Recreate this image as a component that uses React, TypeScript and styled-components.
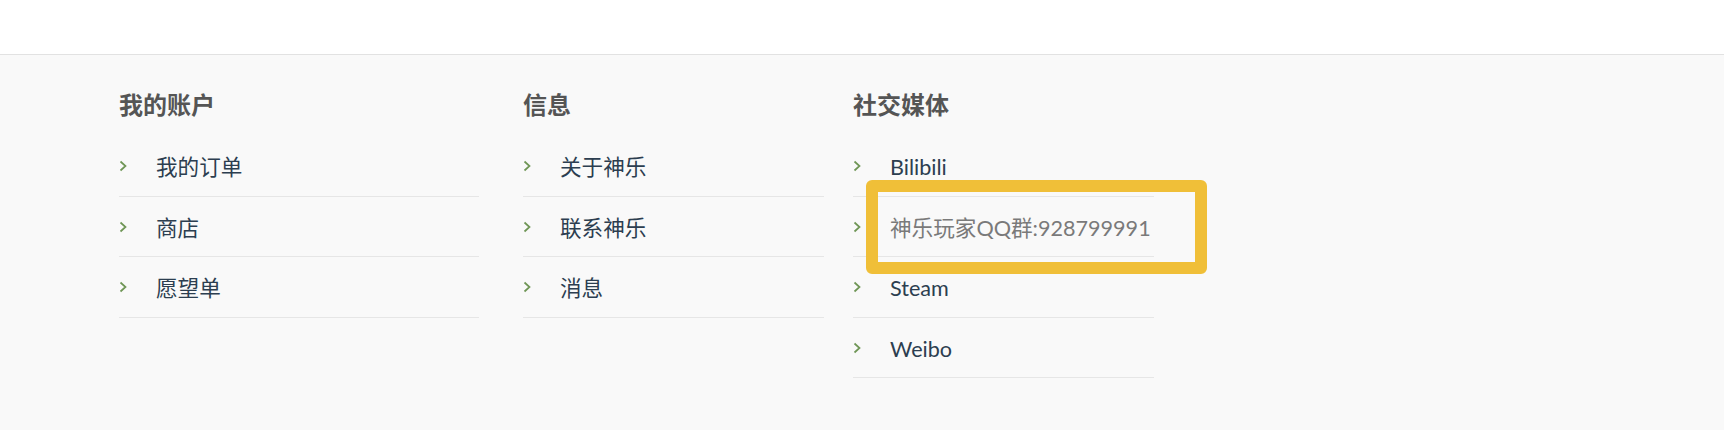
import React from "react";
import styled, { createGlobalStyle } from "styled-components";

const Global = createGlobalStyle`
  html, body { margin: 0; padding: 0; background: #ffffff; }
  body { font-family: Lato, "Noto Sans CJK SC", sans-serif; }
  * { box-sizing: border-box; }
`;

const Page = styled.div`
  width: 100%;
  min-height: 430px;
  display: flex;
  flex-direction: column;
`;

const TopBar = styled.div`
  height: 55px;
  background: #ffffff;
  border-bottom: 1px solid #e2e2e2;
`;

const Footer = styled.footer`
  flex: 1;
  background: #f9f9f9;
  padding: 35px 0 40px 119px;
  display: grid;
  grid-template-columns: 404px 330px 301px;
  align-items: start;
`;

const Column = styled.section<{ $listWidth: number }>`
  width: ${(p) => p.$listWidth}px;
`;

const Heading = styled.h3`
  margin: 0 0 16px;
  font-family: Lato, "Noto Sans CJK SC", sans-serif;
  font-weight: 700;
  font-size: 24px;
  line-height: 30px;
  color: #555555;
`;

const List = styled.ul`
  list-style: none;
  margin: 0;
  padding: 0;
`;

const Item = styled.li`
  position: relative;
  display: flex;
  align-items: center;
  padding: 16px 0 13.5px;
  border-bottom: 1px solid #e6e6e6;
`;

const Chevron = styled.svg`
  flex: none;
  width: 9px;
  height: 12px;
  margin-left: 0px;
  margin-right: 28px;
  margin-top: -2px;
  color: #6f9656;
`;

const Link = styled.a<{ $muted?: boolean }>`
  font-family: Lato, "Noto Sans CJK SC", sans-serif;
  font-size: 21.6px;
  line-height: 30px;
  white-space: nowrap;
  color: ${(p) => (p.$muted ? "#7a7a7a" : "#2c3e50")};
  text-decoration: none;
`;

const Highlight = styled.div`
  position: absolute;
  left: 13px;
  top: -17px;
  width: 341px;
  height: 94px;
  border: 12px solid #f0bf38;
  border-radius: 6px;
  pointer-events: none;
`;

type Entry = { label: string; muted?: boolean; highlight?: boolean };

const columns: { title: string; width: number; items: Entry[] }[] = [
  { title: "我的账户", width: 360, items: [{ label: "我的订单" }, { label: "商店" }, { label: "愿望单" }] },
  { title: "信息", width: 301, items: [{ label: "关于神乐" }, { label: "联系神乐" }, { label: "消息" }] },
  {
    title: "社交媒体",
    width: 301,
    items: [
      { label: "Bilibili" },
      { label: "神乐玩家QQ群:928799991", muted: true, highlight: true },
      { label: "Steam" },
      { label: "Weibo" },
    ],
  },
];

const ChevronIcon = () => (
  <Chevron viewBox="0 0 9 12" aria-hidden="true">
    <polyline points="1.5,1.5 6.5,6 1.5,10.5" fill="none" stroke="currentColor" strokeWidth="1.7" />
  </Chevron>
);

export default function App() {
  return (
    <Page>
      <Global />
      <TopBar />
      <Footer>
        {columns.map((col) => (
          <Column key={col.title} $listWidth={col.width}>
            <Heading>{col.title}</Heading>
            <List>
              {col.items.map((it) => (
                <Item key={it.label}>
                  <ChevronIcon />
                  <Link href="#" $muted={it.muted}>
                    {it.label}
                  </Link>
                  {it.highlight && <Highlight />}
                </Item>
              ))}
            </List>
          </Column>
        ))}
      </Footer>
    </Page>
  );
}
